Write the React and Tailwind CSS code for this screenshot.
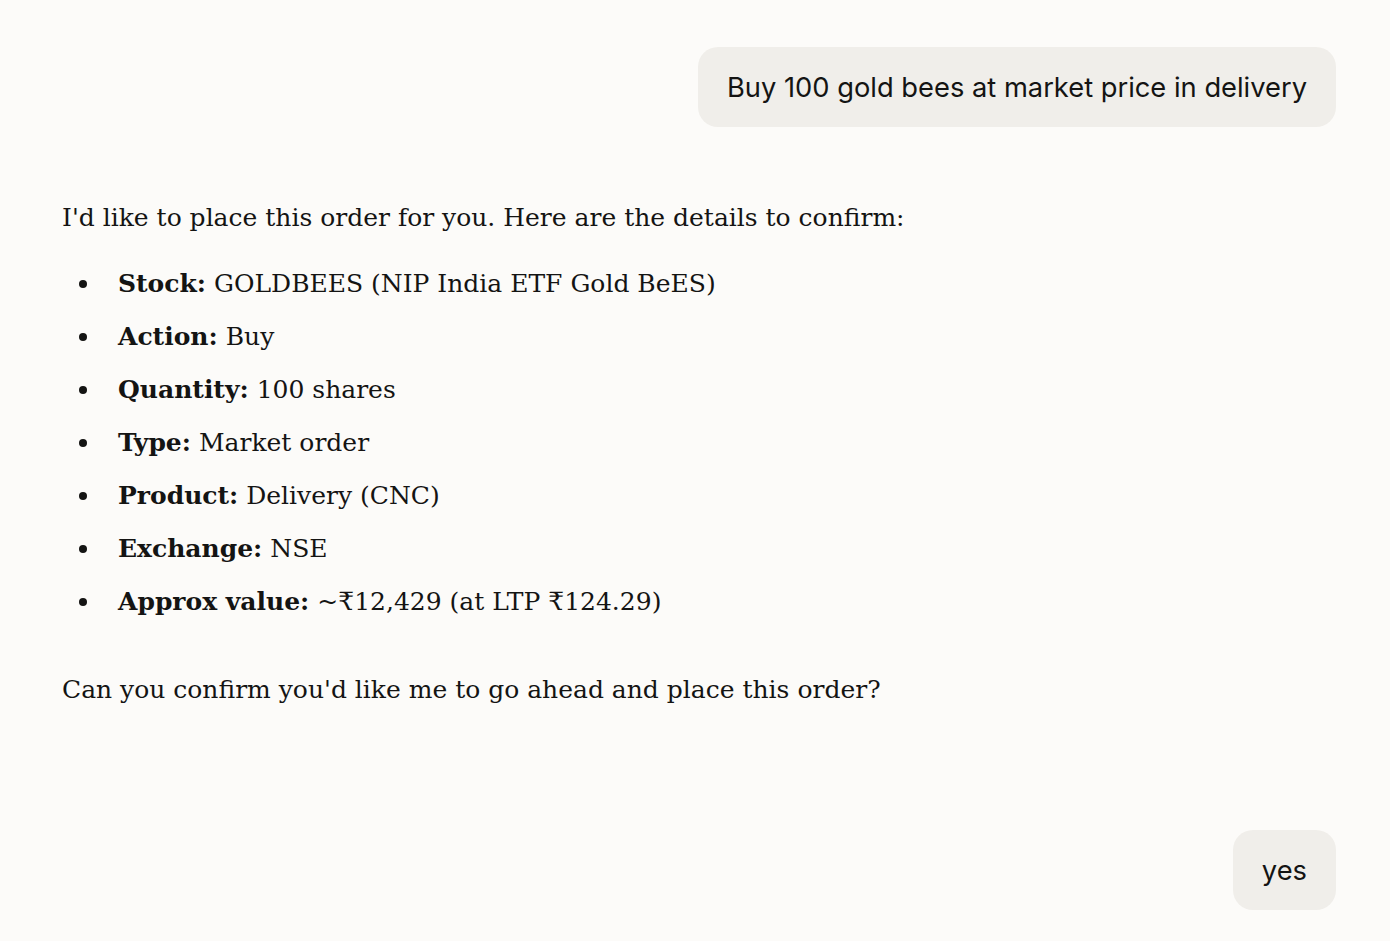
const items = [
  ['Stock:', 'GOLDBEES (NIP India ETF Gold BeES)'],
  ['Action:', 'Buy'],
  ['Quantity:', '100 shares'],
  ['Type:', 'Market order'],
  ['Product:', 'Delivery (CNC)'],
  ['Exchange:', 'NSE'],
  ['Approx value:', '~₹12,429 (at LTP ₹124.29)'],
];

function UserBubble({ children }) {
  return (
    <div className="flex justify-end">
      <div className="rounded-[20px] bg-[#f0eeea] px-[29px] pt-[21px] pb-[19px] text-[27.3px] leading-[40px] text-[#141413] [font-family:Inter,'Liberation_Sans',sans-serif]">
        {children}
      </div>
    </div>
  );
}

export default function App() {
  return (
    <div className="min-h-screen bg-[#fcfbf9] pl-[62px] pr-[54px] pt-[47px] text-[#141413]">
      <UserBubble>Buy 100 gold bees at market price in delivery</UserBubble>

      <div className="mt-[71px] text-[25px] leading-[40px] [font-family:'DejaVu_Serif','Liberation_Serif',serif]">
        <p>I'd like to place this order for you. Here are the details to confirm:</p>
        <ul className="mt-[26px] space-y-[13px]">
          {items.map(([label, value]) => (
            <li key={label} className="flex items-center">
              <span className="ml-[17px] mr-[31px] h-[8px] w-[8px] shrink-0 rounded-full bg-[#141413]" />
              <span>
                <strong className="font-bold">{label}</strong> {value}
              </span>
            </li>
          ))}
        </ul>
        <p className="mt-[48px]">Can you confirm you'd like me to go ahead and place this order?</p>
      </div>

      <div className="mt-[120px]">
        <UserBubble>yes</UserBubble>
      </div>
    </div>
  );
}
